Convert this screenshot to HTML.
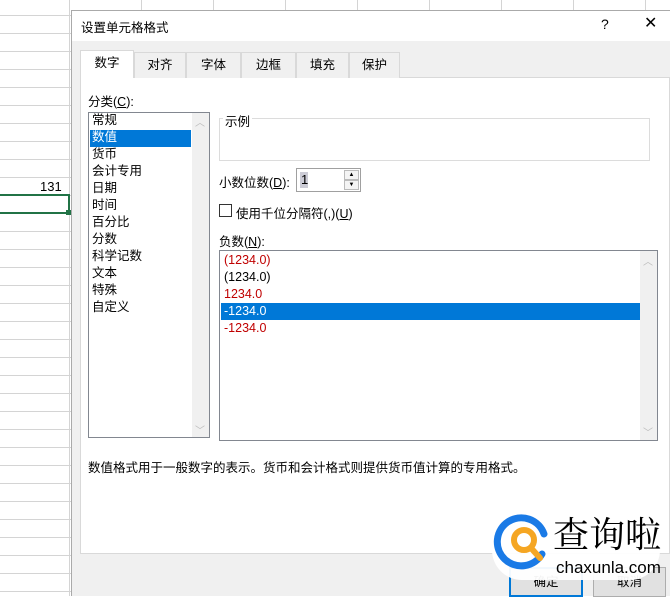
<!DOCTYPE html>
<html><head><meta charset="utf-8"><style>
*{margin:0;padding:0;box-sizing:border-box}
body{width:670px;height:596px;overflow:hidden;background:#fff;position:relative;font-family:"Liberation Sans","Microsoft YaHei","Noto Sans CJK SC",sans-serif;font-size:12px;color:#000}
.a{position:absolute}
.hl{position:absolute;left:0;width:72px;height:1px;background:#d4d4d4}
.vl{position:absolute;top:0;width:1px;background:#d4d4d4}
.dlg{left:71px;top:10px;width:599px;height:586px;background:#f0f0f0;border-left:1px solid #aaa;border-top:1px solid #aaa}
.tab{position:absolute;top:52px;height:26px;border:1px solid #d9d9d9;border-bottom:none;background:#f0f0f0;text-align:center;line-height:25px;font-size:12.5px}
.it{position:absolute;left:92px;height:17px;line-height:17px;font-size:12.5px}
.ng{position:absolute;left:224px;height:17px;line-height:17px;font-size:12.5px}
</style></head><body>
<div class="hl" style="top:15px"></div><div class="hl" style="top:33px"></div><div class="hl" style="top:51px"></div><div class="hl" style="top:69px"></div><div class="hl" style="top:87px"></div><div class="hl" style="top:105px"></div><div class="hl" style="top:123px"></div><div class="hl" style="top:141px"></div><div class="hl" style="top:159px"></div><div class="hl" style="top:177px"></div><div class="hl" style="top:195px"></div><div class="hl" style="top:213px"></div><div class="hl" style="top:231px"></div><div class="hl" style="top:249px"></div><div class="hl" style="top:267px"></div><div class="hl" style="top:285px"></div><div class="hl" style="top:303px"></div><div class="hl" style="top:321px"></div><div class="hl" style="top:339px"></div><div class="hl" style="top:357px"></div><div class="hl" style="top:375px"></div><div class="hl" style="top:393px"></div><div class="hl" style="top:411px"></div><div class="hl" style="top:429px"></div><div class="hl" style="top:447px"></div><div class="hl" style="top:465px"></div><div class="hl" style="top:483px"></div><div class="hl" style="top:501px"></div><div class="hl" style="top:519px"></div><div class="hl" style="top:537px"></div><div class="hl" style="top:555px"></div><div class="hl" style="top:573px"></div><div class="hl" style="top:591px"></div>
<div class="vl" style="left:69px;height:596px"></div>
<div class="vl" style="left:141px;height:10px"></div><div class="vl" style="left:213px;height:10px"></div><div class="vl" style="left:285px;height:10px"></div><div class="vl" style="left:357px;height:10px"></div><div class="vl" style="left:429px;height:10px"></div><div class="vl" style="left:501px;height:10px"></div><div class="vl" style="left:573px;height:10px"></div><div class="vl" style="left:645px;height:10px"></div>
<div class="a" style="left:40px;top:179px;font-size:13px">131</div>
<div class="a" style="left:-2px;top:194px;width:72px;height:20px;border:2px solid #217346"></div>
<div class="a" style="left:66px;top:210px;width:5px;height:5px;background:#217346"></div>

<div class="a dlg"></div>
<div class="a" style="left:72px;top:11px;width:598px;height:30px;background:#fff"></div>
<div class="a" style="left:81px;top:17px;font-size:12.5px">设置单元格格式</div>
<div class="a" style="left:601px;top:16px;font-size:14px">?</div>
<div class="a" style="left:644px;top:13px;font-size:16px">✕</div>

<div class="a" style="left:80px;top:77px;width:590px;height:477px;background:#fff;border:1px solid #d9d9d9"></div>
<div class="tab" style="left:80px;width:54px;background:#fff;top:50px;height:28px">数字</div>
<div class="tab" style="left:134px;width:52px">对齐</div>
<div class="tab" style="left:186px;width:55px">字体</div>
<div class="tab" style="left:241px;width:55px">边框</div>
<div class="tab" style="left:296px;width:53px">填充</div>
<div class="tab" style="left:349px;width:51px">保护</div>

<div class="a" style="left:88px;top:91px;font-size:12.5px">分类(<u>C</u>):</div>
<div class="a" style="left:88px;top:112px;width:122px;height:326px;border:1px solid #828790;background:#fff"></div>
<div class="a" style="left:192px;top:113px;width:17px;height:324px;background:#f0f0f0"></div>
<div class="a" style="left:195px;top:114px;color:#bbb;font-size:10px">︿</div>
<div class="a" style="left:195px;top:422px;color:#bbb;font-size:10px">﹀</div>
<div class="a" style="left:90px;top:130px;width:101px;height:17px;background:#0078d7"></div>
<div class="it" style="top:112px">常规</div>
<div class="it" style="top:129px;color:#fff">数值</div>
<div class="it" style="top:146px">货币</div>
<div class="it" style="top:163px">会计专用</div>
<div class="it" style="top:180px">日期</div>
<div class="it" style="top:197px">时间</div>
<div class="it" style="top:214px">百分比</div>
<div class="it" style="top:231px">分数</div>
<div class="it" style="top:248px">科学记数</div>
<div class="it" style="top:265px">文本</div>
<div class="it" style="top:282px">特殊</div>
<div class="it" style="top:299px">自定义</div>

<div class="a" style="left:219px;top:118px;width:431px;height:43px;border:1px solid #dcdcdc"></div>
<div class="a" style="left:223px;top:111px;background:#fff;padding:0 2px;font-size:12.5px">示例</div>

<div class="a" style="left:219px;top:172px;font-size:12.5px">小数位数(<u>D</u>):</div>
<div class="a" style="left:296px;top:168px;width:65px;height:24px;border:1px solid #a0a0a0;background:#fff"></div>
<div class="a" style="left:300px;top:172px;width:8px;height:16px;background:#aab;opacity:.6"></div>
<div class="a" style="left:301px;top:172px;font-size:13px">1</div>
<div class="a" style="left:344px;top:170px;width:15px;height:10px;border:1px solid #bbb;background:#f4f4f4;font-size:6px;text-align:center;line-height:9px">▲</div>
<div class="a" style="left:344px;top:180px;width:15px;height:10px;border:1px solid #bbb;background:#f4f4f4;font-size:6px;text-align:center;line-height:9px">▼</div>

<div class="a" style="left:219px;top:204px;width:13px;height:13px;border:1px solid #333;background:#fff"></div>
<div class="a" style="left:236px;top:203px;font-size:12.5px">使用千位分隔符(,)(<u>U</u>)</div>
<div class="a" style="left:219px;top:231px;font-size:12.5px">负数(<u>N</u>):</div>

<div class="a" style="left:219px;top:250px;width:439px;height:191px;border:1px solid #828790;background:#fff"></div>
<div class="a" style="left:640px;top:251px;width:17px;height:189px;background:#f0f0f0"></div>
<div class="a" style="left:643px;top:253px;color:#bbb;font-size:10px">︿</div>
<div class="a" style="left:643px;top:424px;color:#bbb;font-size:10px">﹀</div>
<div class="a" style="left:221px;top:303px;width:419px;height:17px;background:#0078d7"></div>
<div class="ng" style="top:252px;color:#c00000">(1234.0)</div>
<div class="ng" style="top:269px">(1234.0)</div>
<div class="ng" style="top:286px;color:#c00000">1234.0</div>
<div class="ng" style="top:303px;color:#fff">-1234.0</div>
<div class="ng" style="top:320px;color:#c00000">-1234.0</div>

<div class="a" style="left:88px;top:457px;font-size:12.5px">数值格式用于一般数字的表示。货币和会计格式则提供货币值计算的专用格式。</div>

<div class="a" style="left:509px;top:567px;width:74px;height:30px;border:2px solid #0078d7;background:#e1e1e1;text-align:center;line-height:26px;font-size:12.5px">确定</div>
<div class="a" style="left:593px;top:567px;width:73px;height:30px;border:1px solid #adadad;background:#e1e1e1;text-align:center;line-height:28px;font-size:12.5px">取消</div>

<div class="a" style="left:492px;top:506px;width:168px;height:74px;background:#fff;border-radius:30px;opacity:.95"></div>
<svg class="a" style="left:490px;top:508px" width="70" height="70" viewBox="0 0 70 70">
<path d="M52 46 A24 24 0 1 1 54 26" fill="none" stroke="#1a7ae6" stroke-width="7" stroke-linecap="round"/>
<circle cx="34" cy="32" r="10" fill="none" stroke="#f5a623" stroke-width="6"/>
<line x1="41" y1="40" x2="50" y2="50" stroke="#f5a623" stroke-width="6" stroke-linecap="round"/>
</svg>
<div class="a" style="left:553px;top:510px;font-size:36px;font-family:'Noto Serif CJK SC',serif;line-height:46px">查询啦</div>
<div class="a" style="left:556px;top:558px;font-size:17px;line-height:20px">chaxunla.com</div>
</body></html>
